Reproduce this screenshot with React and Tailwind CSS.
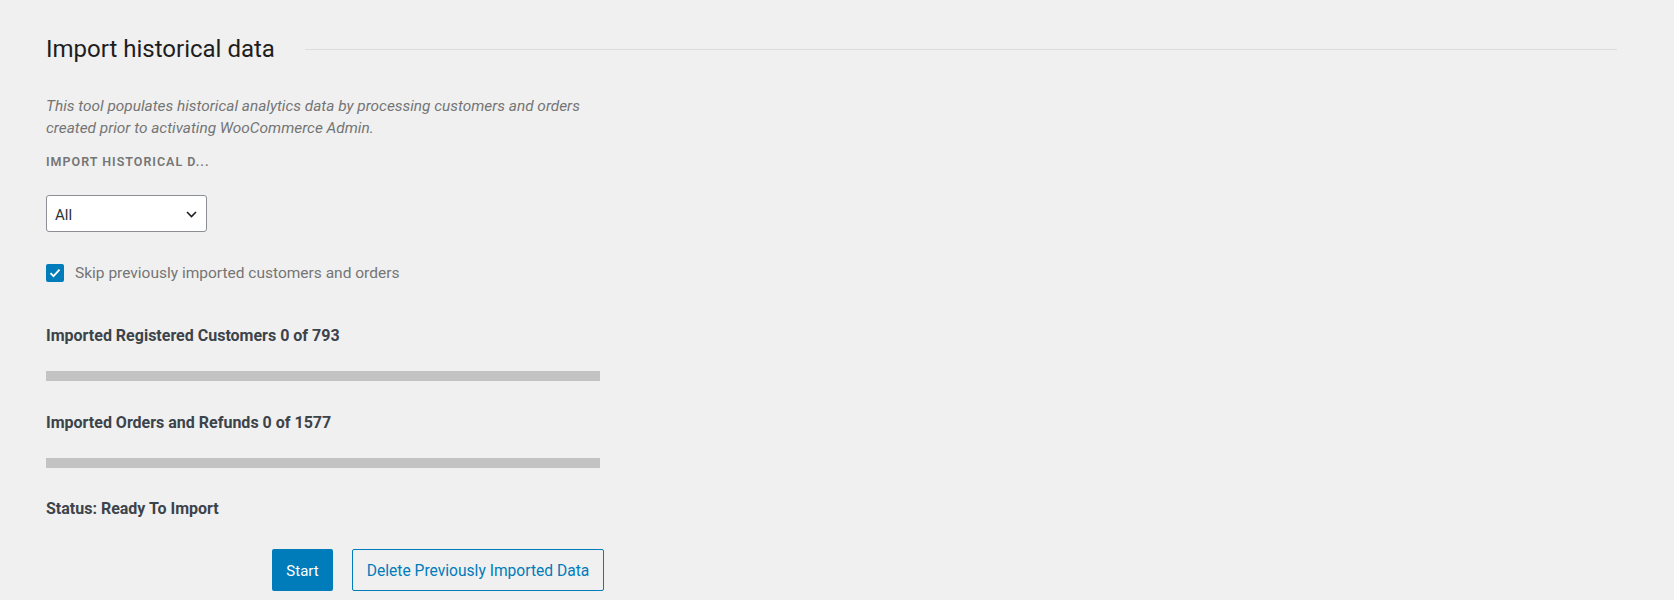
// Import historical data settings

import React, { useState } from 'react';

const ProgressRow = ({ label, className }) => (
  <div className={className}>
    <h3 className="text-[16px] leading-[22px] font-bold text-[#3c434a]">{label}</h3>
    <div className="mt-[24px] h-[10px] w-[554px] bg-[#c3c3c3]" />
  </div>
);

const App = () => {
  const [period, setPeriod] = useState('All');
  const [skip, setSkip] = useState(true);

  return (
    <div
      className="min-h-screen bg-[#f0f0f0] pl-[46px] pr-[57px] pt-[33px]"
      style={{ fontFamily: '"Segoe UI", Roboto, "Liberation Sans", sans-serif' }}
    >
      {/* Title */}
      <div className="flex items-center gap-[30px]">
        <h2 className="text-[24px] leading-[32px] font-normal text-[#1e1e1e] whitespace-nowrap">
          Import historical data
        </h2>
        <div className="flex-1 h-px bg-[#dcdcde]" />
      </div>

      {/* Description */}
      <p className="mt-[30px] italic text-[15.4px] leading-[22px] text-[#757575] whitespace-nowrap">
        This tool populates historical analytics data by processing customers and orders
        <br />
        created prior to activating WooCommerce Admin.
      </p>

      <div className="mt-[15px] text-[12.5px] leading-[16px] font-semibold uppercase tracking-[1px] text-[#757575]">
        Import historical d...
      </div>

      {/* Period select */}
      <div className="mt-[25px] relative w-[161px] h-[37px]">
        <select
          value={period}
          onChange={(e) => setPeriod(e.target.value)}
          className="appearance-none w-full h-full bg-white border border-[#8c8f94] rounded-[3px] pl-[8px] pr-[30px] pt-[3px] text-[15px] text-[#2c3338] outline-none"
        >
          <option value="All">All</option>
          <option value="Last 365 days">Last 365 days</option>
          <option value="Last 90 days">Last 90 days</option>
          <option value="Last 30 days">Last 30 days</option>
        </select>
        <svg
          className="absolute right-[10px] top-[16px] pointer-events-none"
          width="11"
          height="7"
          viewBox="0 0 11 7"
          fill="none"
        >
          <path d="M1 1l4.5 4.5L10 1" stroke="#1e1e1e" strokeWidth="1.6" />
        </svg>
      </div>

      {/* Skip checkbox */}
      <label className="mt-[32px] flex items-center gap-[11px] cursor-pointer w-fit">
        <span
          onClick={() => setSkip(!skip)}
          className={
            skip
              ? 'w-[18px] h-[18px] rounded-[2px] bg-[#007cba] flex items-center justify-center'
              : 'w-[18px] h-[18px] rounded-[2px] bg-white border border-[#8c8f94]'
          }
        >
          {skip && (
            <svg width="12" height="10" viewBox="0 0 12 10" fill="none">
              <path d="M1.5 5.2l3 3 6-6.5" stroke="white" strokeWidth="1.8" />
            </svg>
          )}
        </span>
        <span className="text-[15.5px] leading-[18px] text-[#757575]">
          Skip previously imported customers and orders
        </span>
      </label>

      <ProgressRow className="mt-[43px]" label="Imported Registered Customers 0 of 793" />
      <ProgressRow className="mt-[31px]" label="Imported Orders and Refunds 0 of 1577" />

      <div className="mt-[30px] text-[16px] leading-[22px] font-bold text-[#3c434a]">
        Status: Ready To Import
      </div>

      {/* Actions */}
      <div className="mt-[29px] w-[558px] flex justify-end gap-[19px]">
        <button className="h-[42px] w-[61px] pt-[3px] bg-[#007cba] text-white text-[15px] rounded-[2px]">
          Start
        </button>
        <button className="h-[42px] w-[252px] pt-[3px] border border-[#007cba] text-[#007cba] text-[15.6px] rounded-[2px]">
          Delete Previously Imported Data
        </button>
      </div>
    </div>
  );
};

export default App;
